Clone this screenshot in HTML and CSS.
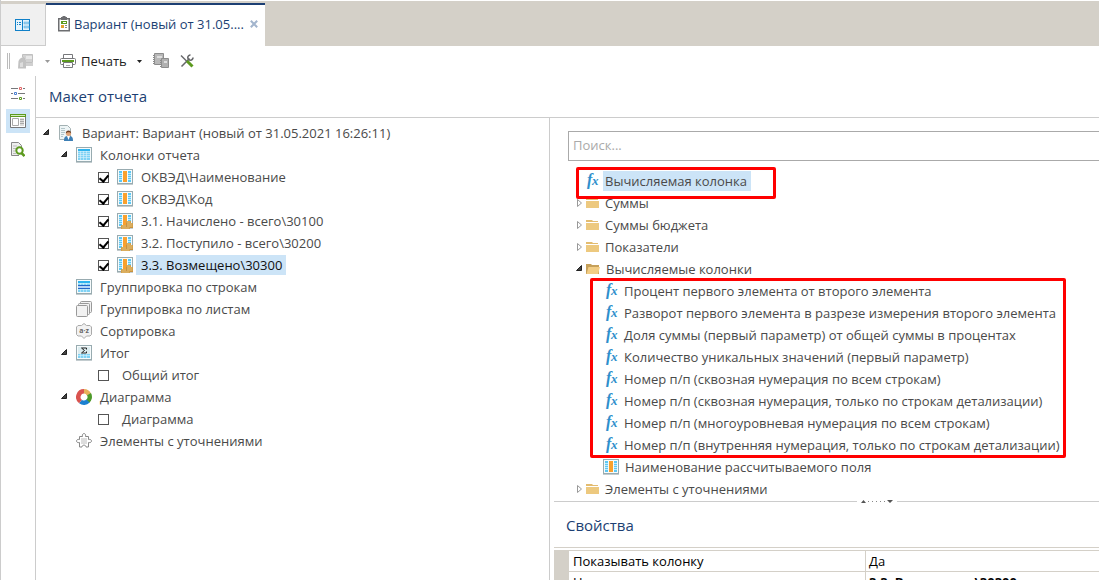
FILE: index.html
```
<!DOCTYPE html>
<html lang="ru">
<head>
    <meta charset="UTF-8">
    <meta name="viewport" content="width=device-width, initial-scale=1.0">
    <title>Макет отчета</title>
    <link rel="stylesheet" href="styles.css">
</head>
<body>
    <!-- Icon sprite -->
    <svg class="sprite" aria-hidden="true">
        <symbol id="i-open" viewBox="0 0 8 8"><path d="M6.500 .5v5h-5z" fill="#444" stroke="#222"/></symbol>
        <symbol id="i-closed" viewBox="0 0 8 8"><path d="M2.500 .5v7l4-3.500z" fill="#fff" stroke="#999"/></symbol>
        <symbol id="i-down" viewBox="0 0 5 3"><path d="M0 0h5L2.500 3z" fill="currentColor"/></symbol>
        <symbol id="i-home" viewBox="0 0 16 12">
            <rect x=".5" y=".5" width="14" height="11" fill="#e6f4fc" stroke="#1080c8"/>
            <path d="M7.500 1v10" stroke="#1080c8"/>
            <path d="M2 3.500h1m1 0h2M2 5.500h1m1 0h2" stroke="#1080c8"/>
            <path d="M9 3h5v2H9zM9 7h5v2H9z" fill="#9fd3f2" stroke="#5aaede" stroke-width=".5"/>
        </symbol>
        <symbol id="i-report" viewBox="0 0 12 16">
            <rect x=".75" y="2.750" width="10.500" height="12" fill="#fff" stroke="#6d6e71" stroke-width="1.500"/>
            <path d="M3 1h1.500V0h3v1H9v3H3z" fill="#6d6e71"/>
            <path d="M3 5h6v3H3z" fill="#5c9a1e"/><path d="M5 6h3v1H5z" fill="#fff"/>
            <path d="M3 9h3v3H3z" fill="#e0a030"/><path d="M7 9.500h2M7 11.500h2" stroke="#888"/>
        </symbol>
        <symbol id="i-export" viewBox="0 0 17 17">
            <path d="M5.500 1.500h10v8h-8V5l-2-1z" fill="#d2d2d2" stroke="#c0c0c0"/>
            <path d="M9 3h6v3H9z" fill="#e8e8e8"/>
            <path d="M1.500 8C3 5 5 4 7 4v3h2v8.500H1z" fill="#c2c2c2"/><path d="M3 10l3-1v5H3z" fill="#ddd"/>
            <path d="M9 10h7v3H9z" fill="#d0d0d0"/>
        </symbol>
        <symbol id="i-print" viewBox="0 0 16 14">
            <path d="M3.500 4V.5h9V4" fill="#fff" stroke="#77787b"/>
            <rect x=".5" y="4.500" width="15" height="6" rx="1" fill="#fff" stroke="#77787b"/>
            <path d="M2 6h12v2H2z" fill="#5c9a1e"/>
            <path d="M3.500 8.500h9v5h-9z" fill="#fff" stroke="#77787b"/><path d="M6 11.500h4" stroke="#aaa"/>
        </symbol>
        <symbol id="i-copy" viewBox="0 0 17 16">
            <path d="M1.500 .5h9v11h-9z" fill="#b8b8b8" stroke="#8d8d8d"/>
            <path d="M4 3h5v2H4z" fill="#ddd"/><path d="M.5 2v9" stroke="#888" stroke-dasharray="1 1"/>
            <path d="M8.500 5.500h7v9h-7z" fill="#b0b0b0" stroke="#8d8d8d"/>
            <path d="M11 8h3v2h-3z" fill="#ddd"/><path d="M7.500 7v7" stroke="#888" stroke-dasharray="1 1"/>
        </symbol>
        <symbol id="i-tools" viewBox="0 0 14 14">
            <path d="M1.500 12.500l8-8" stroke="#66676a" stroke-width="1.600"/>
            <path d="M10.500 1a2.600 2.600 0 1 0 2.500 2.500" fill="none" stroke="#66676a" stroke-width="1.600"/>
            <path d="M1 1.500l6 6" stroke="#66676a" stroke-width="1.400"/>
            <path d="M7 7l5.500 5.500" stroke="#5c9a1e" stroke-width="3"/>
        </symbol>
        <symbol id="i-sliders" viewBox="0 0 14 14">
            <path d="M0 2.500h7m5 0h2M0 7.500h2m5 0h7M0 12.500h7m5 0h2" stroke="#77787b"/>
            <path d="M8.500 1.500h2v2h-2z" fill="#fff" stroke="#e06666"/>
            <path d="M3.500 6.500h2v2h-2z" fill="#fff" stroke="#4a7fd0"/>
            <path d="M8.500 11.500h2v2h-2z" fill="#fff" stroke="#5c9a1e"/>
        </symbol>
        <symbol id="i-layout" viewBox="0 0 16 14">
            <path d="M.5 .5h15v13H.5z" fill="#fff" stroke="#77787b"/>
            <path d="M0 0h16v3H0z" fill="#5c9a1e"/><path d="M1 1.500h14" stroke="#d5e9bf"/>
            <path d="M2.500 4.500h6v7h-6z" fill="#fff" stroke="#aaa"/>
            <path d="M10 4h4v8h-4z" fill="#ddd"/><path d="M10 5.500h4M10 7.500h4M10 9.500h4" stroke="#aaa"/>
        </symbol>
        <symbol id="i-preview" viewBox="0 0 14 15">
            <path d="M8 13.500H.5V.5h7l3 3V6" fill="#eee" stroke="#888"/>
            <path d="M2 4h4M2 6.500h3M2 9h2M2 11.500h3" stroke="#bbb"/>
            <circle cx="8.500" cy="8.500" r="3.200" fill="#fff" stroke="#5c9a1e" stroke-width="2"/>
            <path d="M10.500 11l3 3" stroke="#5c9a1e" stroke-width="2.500"/>
        </symbol>
        <symbol id="i-variant" viewBox="0 0 16 16">
            <path d="M1.500 .5h8l3 3v11h-11z" fill="#eef5f6" stroke="#a3b1b3"/>
            <path d="M3 3.500h4M3 5.500h4M3 7.500h4M3 9.500h3M3 11.500h2" stroke="#b3c5c9"/>
            <path d="M6 16c0-4 1-5 4.500-5s4.500 1 4.500 5z" fill="#3d7fb5"/>
            <path d="M9 11h3l-1.500 4z" fill="#fff"/>
            <circle cx="10.500" cy="8.500" r="2.500" fill="#dfa478"/>
            <path d="M7.800 8.500c-.2-4 5.600-4 5.400 0-1-1.700-4-1.700-5.400 0z" fill="#6b3d22"/>
        </symbol>
        <symbol id="i-frame" viewBox="0 0 16 16">
            <rect x=".5" y=".5" width="15" height="14" fill="#f6fbfc" stroke="#98abb0"/>
            <path d="M0 15.500h16" stroke="#c3cccf"/>
        </symbol>
        <symbol id="i-grid" viewBox="0 0 16 16">
            <use href="#i-frame"/>
            <path d="M2 2h12v2H2z" fill="#2fb4ee"/><path d="M2 4h12v9H2z" fill="#7fd2f5"/>
            <path d="M4.500 4v9M7.500 4v9M10.500 4v9M2 4.500h12M2 6.500h12M2 8.500h12M2 10.500h12" stroke="#d8f2fc" stroke-width=".6"/>
        </symbol>
        <symbol id="i-column" viewBox="0 0 16 16">
            <use href="#i-frame"/>
            <path d="M2 2h3v11H2zM11 2h3v11h-3z" fill="#5cc8f4"/>
            <path d="M2 4.500h3M2 6.500h3M2 8.500h3M2 10.500h3M11 4.500h3M11 6.500h3M11 8.500h3M11 10.500h3" stroke="#c2eafa"/>
            <path d="M6 2h4v11H6z" fill="#f9a12e"/>
        </symbol>
        <symbol id="i-sum" viewBox="0 0 16 16">
            <use href="#i-column"/>
            <path d="M9 8h5v2h2v5h-3v1H4v-4h5z" fill="#c8923e"/>
            <path d="M9.500 9h4M10 11h5.500M10 13h5.500M4.500 13h4.500M4.500 15h8" stroke="#edc97f"/>
        </symbol>
        <symbol id="i-rows" viewBox="0 0 16 16">
            <use href="#i-grid"/><path d="M2 6h12v4H2z" fill="#b6d4f5"/><path d="M2 6.500h12M2 9.500h12" stroke="#2467c8"/>
        </symbol>
        <symbol id="i-sheets" viewBox="0 0 16 16">
            <g fill="#f2f2f2" stroke="#999"><rect x="4.500" y=".5" width="11" height="11" rx="1"/><rect x="2.500" y="2.500" width="11" height="11" rx="1"/><rect x=".5" y="4.500" width="11" height="11" rx="1"/></g>
        </symbol>
        <symbol id="i-sort" viewBox="0 0 16 16">
            <path d="M2 2.500h3.500L8 .5l2.500 2H14l1.500 1.500v7.500L14 13h-3.500L8 15.500 5.500 13H2L.5 11.500V4z" fill="#f2f2f2" stroke="#aaa"/>
            <text class="icon-sort-text" x="8" y="10" text-anchor="middle">a·z</text>
        </symbol>
        <symbol id="i-total" viewBox="0 0 16 16">
            <use href="#i-grid"/><path d="M2 2h12v7H2z" fill="#dcecef"/>
            <path d="M5.500 3h5v1.500M5.500 3l3 2.500-3 2.500h5V6.500" fill="none" stroke="#222"/>
        </symbol>
        <symbol id="i-chart" viewBox="0 0 16 16">
            <g fill="none" stroke-width="4.500">
                <path d="M8 2.300A5.700 5.700 0 0 1 13 5.500" stroke="#e8b05a"/>
                <path d="M13 5.200A5.700 5.700 0 0 1 11.500 12.500" stroke="#4d9a2a"/>
                <path d="M12 12A5.700 5.700 0 0 1 4.500 12.500" stroke="#1b80d0"/>
                <path d="M4.500 12.500A5.700 5.700 0 0 1 8 2.300" stroke="#d9534f"/>
            </g>
        </symbol>
        <symbol id="i-puzzle" viewBox="0 0 16 16">
            <path d="M3.500 3.500h3c-1-4 4-4 3 0h3v3c4-1 4 4 0 3v4.500H10c0-2.500-4-2.500-4 0H3.500V9.500c-4 1-4-4 0-3z" fill="#fff" stroke="#888"/>
            <path d="M5 5h6v6H5z" fill="#ddd"/>
        </symbol>
        <symbol id="i-fx" viewBox="0 0 13 16">
            <text class="icon-fx-text" x="1" y="12">f</text>
            <text class="icon-fx-text icon-fx-small" x="6" y="12">x</text>
        </symbol>
        <symbol id="i-folder" viewBox="0 0 13 11"><path d="M0 0h6l1 1h5v1H0z" fill="#e3bc70"/><path d="M0 3h13v7H0z" fill="#edc97f"/></symbol>
        <symbol id="i-folder-open" viewBox="0 0 14 11"><path d="M0 0h5l1 1h7v9H0z" fill="#c6a05a"/><path d="M2.500 3H14l-2 7H.5z" fill="#f2cd85"/></symbol>
    </svg>

    <nav class="tabs">
        <button class="tab tab-home" aria-label="Главная"><svg width="16" height="12"><use href="#i-home"/></svg></button>
        <div class="tab tab-active">
            <svg width="12" height="16"><use href="#i-report"/></svg>
            <span class="tab-title">Вариант (новый от 31.05....</span>
            <button class="tab-close" aria-label="Закрыть"><svg width="8" height="8" viewBox="0 0 8 8"><path d="M.8 .8l6.400 6.400M7.200 .8L.8 7.200" stroke="#a3b5cd" stroke-width="2"/></svg></button>
        </div>
    </nav>

    <div class="toolbar">
        <span class="grip"></span>
        <button class="tool" aria-label="Экспорт" disabled><svg width="17" height="17"><use href="#i-export"/></svg></button>
        <button class="tool tool-arrow" aria-label="Варианты экспорта" disabled><svg width="5" height="3"><use href="#i-down"/></svg></button>
        <button class="tool tool-print"><svg width="16" height="14"><use href="#i-print"/></svg>Печать</button>
        <button class="tool tool-arrow" aria-label="Варианты печати"><svg width="5" height="3"><use href="#i-down"/></svg></button>
        <button class="tool tool-copy" aria-label="Копировать"><svg width="17" height="16"><use href="#i-copy"/></svg></button>
        <button class="tool" aria-label="Настройка"><svg width="14" height="14"><use href="#i-tools"/></svg></button>
    </div>

    <div class="workspace">
        <aside class="rail">
            <button class="rail-btn" aria-label="Параметры"><svg width="14" height="14"><use href="#i-sliders"/></svg></button>
            <button class="rail-btn active" aria-label="Макет"><svg width="16" height="14"><use href="#i-layout"/></svg></button>
            <button class="rail-btn" aria-label="Просмотр"><svg width="14" height="15"><use href="#i-preview"/></svg></button>
        </aside>

        <main class="main">
            <h1 class="main-title">Макет отчета</h1>
            <div class="panes">
                <section class="layout-pane">
                    <ul class="tree">
                        <li class="row">
                            <button class="toggle" aria-label="Свернуть"><svg width="8" height="8"><use href="#i-open"/></svg></button>
                            <svg width="16" height="16"><use href="#i-variant"/></svg><span class="text">Вариант: Вариант (новый от 31.05.2021 16:26:11)</span>
                        </li>
                        <li class="row level-1">
                            <button class="toggle" aria-label="Свернуть"><svg width="8" height="8"><use href="#i-open"/></svg></button>
                            <svg width="16" height="16"><use href="#i-grid"/></svg><span class="text">Колонки отчета</span>
                        </li>
                        <li class="row level-2">
                            <input type="checkbox" id="col-name" checked>
                            <svg width="16" height="16"><use href="#i-column"/></svg><label class="text" for="col-name">ОКВЭД\Наименование</label>
                        </li>
                        <li class="row level-2">
                            <input type="checkbox" id="col-code" checked>
                            <svg width="16" height="16"><use href="#i-column"/></svg><label class="text" for="col-code">ОКВЭД\Код</label>
                        </li>
                        <li class="row level-2">
                            <input type="checkbox" id="col-31" checked>
                            <svg width="16" height="16"><use href="#i-sum"/></svg><label class="text" for="col-31">3.1. Начислено - всего\30100</label>
                        </li>
                        <li class="row level-2">
                            <input type="checkbox" id="col-32" checked>
                            <svg width="16" height="16"><use href="#i-sum"/></svg><label class="text" for="col-32">3.2. Поступило - всего\30200</label>
                        </li>
                        <li class="row level-2">
                            <input type="checkbox" id="col-33" checked>
                            <svg width="16" height="16"><use href="#i-sum"/></svg><label class="text selected" for="col-33">3.3. Возмещено\30300</label>
                        </li>
                        <li class="row level-1">
                            <span class="toggle"></span>
                            <svg width="16" height="16"><use href="#i-rows"/></svg><span class="text">Группировка по строкам</span>
                        </li>
                        <li class="row level-1">
                            <span class="toggle"></span>
                            <svg width="16" height="16"><use href="#i-sheets"/></svg><span class="text">Группировка по листам</span>
                        </li>
                        <li class="row level-1">
                            <span class="toggle"></span>
                            <svg width="16" height="16"><use href="#i-sort"/></svg><span class="text">Сортировка</span>
                        </li>
                        <li class="row level-1">
                            <button class="toggle" aria-label="Свернуть"><svg width="8" height="8"><use href="#i-open"/></svg></button>
                            <svg width="16" height="16"><use href="#i-total"/></svg><span class="text">Итог</span>
                        </li>
                        <li class="row level-2">
                            <input type="checkbox" id="grand-total"><label class="text" for="grand-total">Общий итог</label>
                        </li>
                        <li class="row level-1">
                            <button class="toggle" aria-label="Свернуть"><svg width="8" height="8"><use href="#i-open"/></svg></button>
                            <svg width="16" height="16"><use href="#i-chart"/></svg><span class="text">Диаграмма</span>
                        </li>
                        <li class="row level-2">
                            <input type="checkbox" id="chart"><label class="text" for="chart">Диаграмма</label>
                        </li>
                        <li class="row level-1">
                            <span class="toggle"></span>
                            <svg width="16" height="16"><use href="#i-puzzle"/></svg><span class="text">Элементы с уточнениями</span>
                        </li>
                    </ul>
                </section>

                <section class="source-pane">
                    <input class="search" type="text" placeholder="Поиск..." aria-label="Поиск">
                    <ul class="tree source-tree">
                        <li class="row marked marked-row">
                            <span class="toggle"></span>
                            <svg width="13" height="16"><use href="#i-fx"/></svg><span class="text selected muted">Вычисляемая колонка</span>
                        </li>
                        <li class="row">
                            <button class="toggle" aria-label="Развернуть"><svg width="8" height="8"><use href="#i-closed"/></svg></button>
                            <svg width="13" height="11"><use href="#i-folder"/></svg><span class="text">Суммы</span>
                        </li>
                        <li class="row">
                            <button class="toggle" aria-label="Развернуть"><svg width="8" height="8"><use href="#i-closed"/></svg></button>
                            <svg width="13" height="11"><use href="#i-folder"/></svg><span class="text">Суммы бюджета</span>
                        </li>
                        <li class="row">
                            <button class="toggle" aria-label="Развернуть"><svg width="8" height="8"><use href="#i-closed"/></svg></button>
                            <svg width="13" height="11"><use href="#i-folder"/></svg><span class="text">Показатели</span>
                        </li>
                        <li class="row">
                            <button class="toggle" aria-label="Свернуть"><svg width="8" height="8"><use href="#i-open"/></svg></button>
                            <svg width="14" height="11"><use href="#i-folder-open"/></svg><span class="text">Вычисляемые колонки</span>
                        </li>
                        <li>
                            <ul class="functions marked">
                                <li class="row"><svg width="13" height="16"><use href="#i-fx"/></svg><span class="text">Процент первого элемента от второго элемента</span></li>
                                <li class="row"><svg width="13" height="16"><use href="#i-fx"/></svg><span class="text">Разворот первого элемента в разрезе измерения второго элемента</span></li>
                                <li class="row"><svg width="13" height="16"><use href="#i-fx"/></svg><span class="text">Доля суммы (первый параметр) от общей суммы в процентах</span></li>
                                <li class="row"><svg width="13" height="16"><use href="#i-fx"/></svg><span class="text">Количество уникальных значений (первый параметр)</span></li>
                                <li class="row"><svg width="13" height="16"><use href="#i-fx"/></svg><span class="text">Номер п/п (сквозная нумерация по всем строкам)</span></li>
                                <li class="row"><svg width="13" height="16"><use href="#i-fx"/></svg><span class="text">Номер п/п (сквозная нумерация, только по строкам детализации)</span></li>
                                <li class="row"><svg width="13" height="16"><use href="#i-fx"/></svg><span class="text">Номер п/п (многоуровневая нумерация по всем строкам)</span></li>
                                <li class="row"><svg width="13" height="16"><use href="#i-fx"/></svg><span class="text">Номер п/п (внутренняя нумерация, только по строкам детализации)</span></li>
                            </ul>
                        </li>
                        <li class="row calc-field">
                            <svg width="16" height="16"><use href="#i-column"/></svg><span class="text">Наименование рассчитываемого поля</span>
                        </li>
                        <li class="row">
                            <button class="toggle" aria-label="Развернуть"><svg width="8" height="8"><use href="#i-closed"/></svg></button>
                            <svg width="13" height="11"><use href="#i-folder"/></svg><span class="text">Элементы с уточнениями</span>
                        </li>
                    </ul>

                    <div class="splitter">
                        <svg width="32" height="3" viewBox="0 0 32 3"><path d="M0 3l2.500-3L5 3zM26 0h6l-3 3z" fill="#555"/><path d="M7 1.500h18" stroke="#888" stroke-dasharray="1 3"/></svg>
                    </div>

                    <h2 class="props-title">Свойства</h2>
                    <table class="props">
                        <tr><td class="gutter"></td><th scope="row">Показывать колонку</th><td>Да</td></tr>
                        <tr><td class="gutter"></td><th scope="row">Наименование</th><td class="strong">3.3. Возмещено\30300</td></tr>
                    </table>
                </section>
            </div>
        </main>
    </div>
</body>
</html>
```
FILE: styles.css
```
* {
    margin: 0;
    padding: 0;
    box-sizing: border-box;
}

body {
    font-family: 'Open Sans', 'Noto Sans', sans-serif;
    font-size: 13px;
    color: #4a4a4a;
    background: #fff;
    height: 100vh;
    overflow: hidden;
    display: flex;
    flex-direction: column;
    border-left: 1px solid #ccc;
}

button {
    font: inherit;
    color: inherit;
    background: none;
    border: none;
    display: flex;
    align-items: center;
    justify-content: center;
}

svg {
    display: block;
    flex: none;
}

.sprite {
    display: none;
}

.icon-fx-text {
    font: italic bold 16px 'Liberation Serif', serif;
    fill: #2f8fcc;
}

.icon-fx-small {
    font-size: 13px;
}

.icon-sort-text {
    font: bold 7px 'Open Sans', sans-serif;
    fill: #666;
}

/* Tabs */
.tabs {
    display: flex;
    flex: none;
    height: 46px;
    padding-top: 3px;
    background: #d4d0c8;
    border-top: 1px solid #fff;
}

.tab-home {
    width: 45px;
    background: #f0f0f0;
    border-right: 1px solid #ccc;
    border-bottom: 1px solid #ccc;
}

.tab-active {
    display: flex;
    align-items: center;
    width: 219px;
    margin-top: -1px;
    padding: 0 7px 4px 12px;
    background: #fff;
    border-top: 2px solid #1c3f73;
    color: #1c3f73;
}

.tab-title {
    flex: 1;
    margin-left: 4px;
    white-space: nowrap;
}

/* Toolbar */
.toolbar {
    display: flex;
    align-items: center;
    flex: none;
    height: 30px;
    padding-left: 6px;
}

.grip {
    width: 3px;
    height: 16px;
    margin-right: 7px;
    border: 1px solid #bbb;
    border-width: 0 1px;
}

.tool {
    gap: 5px;
    color: #222;
}

.tool:disabled {
    color: #999;
}

.tool-arrow {
    width: 26px;
}

.tool-copy {
    margin-right: 10px;
}

/* Work area */
.workspace {
    display: flex;
    flex: 1;
    min-height: 0;
}

.rail {
    flex: none;
    width: 35px;
    padding: 5px;
    border-right: 1px solid #ccc;
}

.rail-btn {
    width: 24px;
    height: 24px;
    margin-bottom: 4px;
}

.rail-btn.active {
    background: #cce4f7;
}

.main {
    display: flex;
    flex-direction: column;
    flex: 1;
    min-width: 0;
}

.main-title,
.props-title {
    font-size: 15px;
    font-weight: 400;
    color: #1c3f73;
}

.main-title {
    padding: 0 13px;
    line-height: 41px;
    border-bottom: 1px solid #ccc;
}

.panes {
    display: grid;
    grid-template-columns: 514px 1fr;
    flex: 1;
    min-height: 0;
}

.layout-pane {
    padding: 4px 6px;
    border-right: 1px solid #ccc;
}

.source-pane {
    min-width: 0;
    padding-left: 4px;
    overflow: hidden;
}

/* Trees */
.tree,
.functions {
    list-style: none;
}

.row {
    display: flex;
    align-items: center;
    height: 22px;
    white-space: nowrap;
}

.level-1 {
    padding-left: 18px;
}

.level-2 {
    padding-left: 56px;
}

.toggle {
    width: 8px;
    height: 12px;
    margin-right: 8px;
    flex: none;
}

.text {
    margin-left: 3px;
    padding: 0 5px;
    line-height: 20px;
}

.selected {
    padding-right: 4px;
    background: #cce4f7;
    color: #111;
}

.selected.muted {
    color: #4a4a4a;
}

.row input[type="checkbox"] {
    appearance: none;
    display: grid;
    place-items: center;
    width: 11px;
    height: 11px;
    margin-right: 8px;
    border: 1px solid #555;
    background: #fff;
}

.row input[type="checkbox"]:checked::after {
    content: '';
    width: 4px;
    height: 7px;
    margin-bottom: 2px;
    border: solid #000;
    border-width: 0 2px 2px 0;
    transform: rotate(40deg);
}

.row input[type="checkbox"] + label {
    margin-left: 0;
}

/* Source list */
.search {
    display: block;
    width: calc(100% - 14px);
    height: 30px;
    margin: 13px 0 9px 14px;
    padding: 0 4px 2px;
    border: 1px solid #aaa;
    border-right: none;
    border-radius: 0;
    font: inherit;
}

.search::placeholder {
    color: #aaa;
}

.source-tree {
    padding-left: 21px;
}

.source-tree .toggle {
    margin-right: 3px;
}

.source-tree .text {
    margin-left: 4px;
    padding-left: 2px;
}

.functions {
    width: fit-content;
    padding-left: 30px;
}

.calc-field {
    padding-left: 28px;
}

/* Red highlight frames over the list */
.marked {
    position: relative;
}

.marked::after {
    content: '';
    position: absolute;
    inset: -2px -1px -2px 15px;
    border: 3px solid #f00;
    border-radius: 2px;
    pointer-events: none;
}

.marked-row {
    width: 200px;
}

.marked-row::after {
    inset: -3px -1px -7px 1px;
}

/* Properties */
.splitter {
    display: flex;
    align-items: center;
    height: 3px;
}

.splitter::before,
.splitter::after {
    content: '';
    flex: 3;
    height: 1px;
    margin-right: 4px;
    background: #ccc;
}

.splitter::after {
    flex: 2;
    margin: 0 0 0 4px;
}

.props-title {
    padding: 0 12px;
    line-height: 44px;
    margin-bottom: 2px;
    border-bottom: 1px solid #d4d0c8;
}

.props {
    width: 100%;
    table-layout: fixed;
    border-collapse: collapse;
    color: #000;
}

.props th,
.props td {
    height: 21px;
    padding: 0 3px;
    border: 1px solid #d4d0c8;
    border-right: none;
    font-weight: 400;
    line-height: 20px;
    text-align: left;
}

.props th {
    width: 297px;
    padding-left: 4px;
}

.props .gutter {
    width: 14px;
    background: #d4d0c8;
}

.props .strong {
    font-weight: 700;
}
```
